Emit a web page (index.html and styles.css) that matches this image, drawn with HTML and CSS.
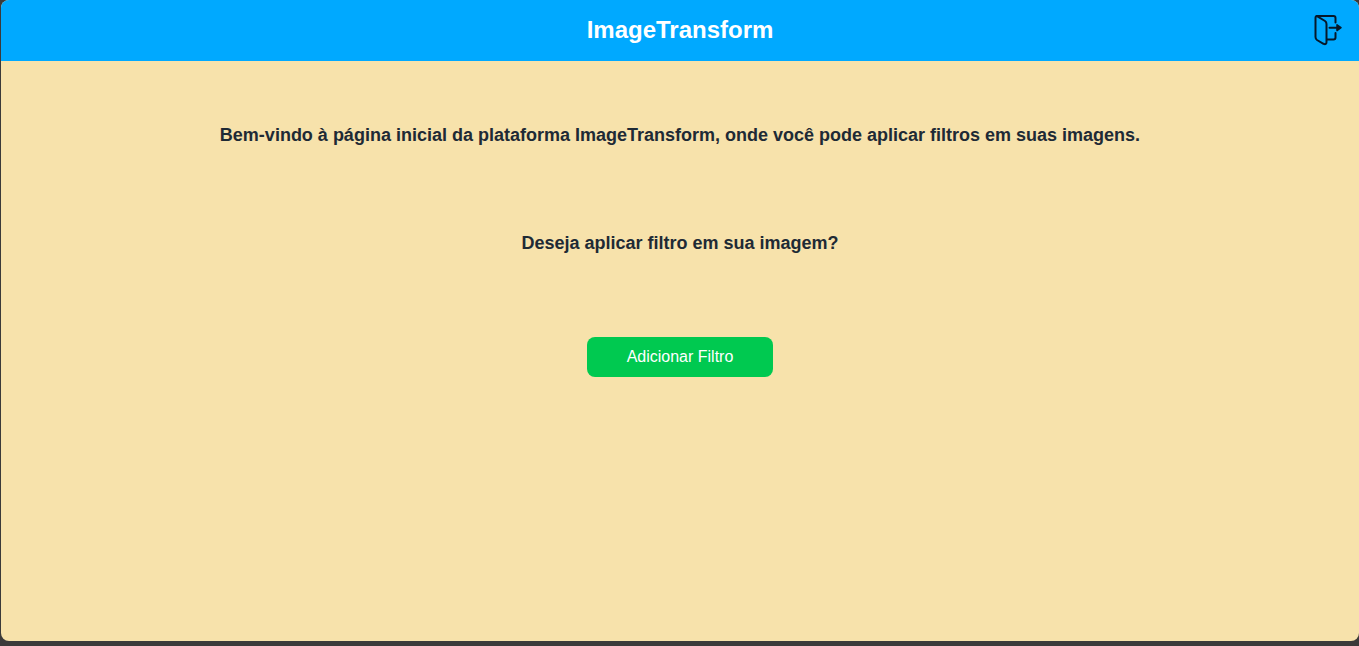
FILE: index.html
```html
<!DOCTYPE html>
<html lang="pt-BR">
<head>
  <meta charset="utf-8">
  <meta name="viewport" content="width=device-width, initial-scale=1">
  <title>ImageTransform</title>
  <link rel="stylesheet" href="styles.css">
</head>
<body>
  <div class="page">
    <header class="header">
      <h1 class="title">ImageTransform</h1>
      <button class="logout" type="button" aria-label="Sair">
        <svg class="logout-icon" viewBox="0 0 30 32" fill="none" stroke="#06182a" stroke-width="2" stroke-linecap="round" stroke-linejoin="round" aria-hidden="true">
          <path d="M4 2H20.500Q22.500 2 22.500 4V8.500M22.500 19V23.500Q22.500 25.500 20.500 25.500H14"/>
          <path d="M4 2Q2.500 2 2.500 4V23Q2.500 25 4 26L10.500 29.800Q13.500 31 13.500 28V10Q13.500 8 12 7L4 2.200"/>
          <path d="M16.500 13.700H25"/>
          <path d="M24 10.800L28 13.700L24 16.600Z" fill="#06182a" stroke-width="1.500"/>
        </svg>
      </button>
    </header>
    <main class="content">
      <h2 class="message">Bem-vindo à página inicial da plataforma ImageTransform, onde você pode aplicar filtros em suas imagens.</h2>
      <h2 class="message">Deseja aplicar filtro em sua imagem?</h2>
      <button class="add-filter" type="button">Adicionar Filtro</button>
    </main>
  </div>
</body>
</html>
```
FILE: styles.css
```css
* {
  box-sizing: border-box;
}

body {
  margin: 0;
  padding: 0 0 5px 1px;
  min-height: 100vh;
  display: flex;
  background: #3b3a3a;
  font-family: "Liberation Sans", Arial, sans-serif;
}

.page {
  flex: 1;
  display: flex;
  flex-direction: column;
  overflow: hidden;
  border-radius: 8px;
  background: #f7e2ab;
}

.header {
  display: grid;
  grid-template-columns: 1fr auto 1fr;
  align-items: center;
  padding: 14px 16px 15px;
  background: #00a9ff;
}

.title {
  grid-column: 2;
  margin: 0;
  font-size: 24px;
  line-height: 32px;
  color: #fff;
}

.logout {
  justify-self: end;
  padding: 0;
  border: 0;
  background: none;
  cursor: pointer;
}

.logout-icon {
  display: block;
  width: 30px;
  height: 32px;
}

.content {
  display: flex;
  flex-direction: column;
  align-items: center;
  gap: 80px;
  padding: 60px 16px;
}

.message {
  margin: 0;
  font-size: 18px;
  line-height: 28px;
  text-align: center;
  color: #1e2a35;
}

.add-filter {
  padding: 8px 40px;
  border: 0;
  border-radius: 8px;
  background: #00c950;
  color: #fff;
  font-family: inherit;
  font-size: 16px;
  line-height: 24px;
  cursor: pointer;
}
```
